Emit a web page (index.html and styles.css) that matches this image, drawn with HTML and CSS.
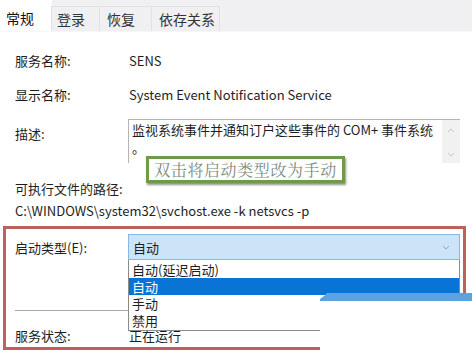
FILE: index.html
```html
<!DOCTYPE html>
<html>
<head>
    <meta charset="UTF-8">
    <title>SENS 属性</title>
    <link rel="stylesheet" href="styles.css">
</head>
<body>
    <div class="tabs">
        <div class="tab active">常规</div>
        <div class="tab">登录</div>
        <div class="tab">恢复</div>
        <div class="tab">依存关系</div>
    </div>

    <div class="panel">
        <div class="row first">
            <span class="label">服务名称:</span>
            <span class="value">SENS</span>
        </div>
        <div class="row">
            <span class="label">显示名称:</span>
            <span class="value">System Event Notification Service</span>
        </div>
        <div class="row desc">
            <span class="label">描述:</span>
            <div class="textbox">
                <div class="textbox-text">监视系统事件并通知订户这些事件的 COM+ 事件系统<br>。</div>
                <div class="scroll">
                    <svg width="8" height="5" viewBox="0 0 8 5"><path d="M1 4 L4 1 L7 4" fill="none" stroke="#c4c4c4" stroke-width="1"/></svg>
                    <svg width="8" height="5" viewBox="0 0 8 5"><path d="M1 1 L4 4 L7 1" fill="none" stroke="#c4c4c4" stroke-width="1"/></svg>
                </div>
            </div>
        </div>
        <div class="path-label">可执行文件的路径:</div>
        <div class="path">C:\WINDOWS\system32\svchost.exe -k netsvcs -p</div>

        <div class="startup">
            <div class="row start-row">
                <span class="label">启动类型(E):</span>
                <div class="select">
                    <span>自动</span>
                    <svg width="8" height="5" viewBox="0 0 8 5"><path d="M1 1 L4 4 L7 1" fill="none" stroke="#9aa5b0" stroke-width="1"/></svg>
                </div>
            </div>
            <div class="divider"></div>
            <div class="row status-row">
                <span class="label">服务状态:</span>
                <span class="value">正在运行</span>
            </div>
            <ul class="dropdown">
                <li>自动(延迟启动)</li>
                <li class="selected">自动</li>
                <li>手动</li>
                <li>禁用</li>
            </ul>
        </div>

        <div class="note">双击将启动类型改为手动</div>
    </div>

    <div class="patch"></div>
</body>
</html>
```

FILE: styles.css
```css
* { box-sizing: border-box; }
body { margin: 0; width: 472px; height: 353px; overflow: hidden; background: #fff; color: #1e1e1e; font-family: "Noto Sans CJK SC", "Noto Sans", sans-serif; font-size: 13px; position: relative; }

.tabs { display: flex; align-items: flex-end; height: 32px; background: #f0eff2; border-bottom: 1px solid #f6f6f6; }
.tab { height: 25px; line-height: 24px; font-size: 14px; color: #333; white-space: nowrap; border: 1px solid #e2e1e4; border-bottom: none; margin-left: -1px; }
.tab.active { height: 32px; line-height: 38px; background: #fff; width: 52px; padding-left: 6px; margin-left: 0; border: none; color: #111; }
.tab:nth-child(2) { width: 49px; padding-left: 5px; }
.tab:nth-child(3) { width: 53px; padding-left: 7px; }
.tab:nth-child(4) { width: 69px; padding-left: 7px; }

.panel { position: relative; padding: 1px 12px 0 15px; }
.row { display: flex; align-items: center; height: 20px; margin-top: 14px; }
.row.first { margin-top: 17px; }
.label { width: 113px; flex-shrink: 0; white-space: nowrap; }
.value { padding-left: 1px; white-space: nowrap; }

.row.desc { align-items: flex-start; height: 44px; margin-top: 15px; }
.row.desc .label { padding-top: 5px; }
.textbox { flex: 1; display: flex; height: 44px; border-top: 1px solid #b4b4b4; border-left: 1px solid #b4b4b4; }
.textbox-text { flex: 1; padding: 1px 0 0 3px; line-height: 18px; }
.scroll { width: 18px; background: #f1f1f1; display: flex; flex-direction: column; justify-content: space-between; align-items: center; padding: 8px 0 6px; }

.path-label { margin-top: 17px; line-height: 18px; }
.path { margin-top: 4px; line-height: 18px; }

.startup { position: relative; margin: 6px -6px 0 -12px; height: 124px; border: 3px solid #c0605c; padding: 5px 3px 0 9px; }
.start-row { margin-top: 0; height: 26px; }
.select { flex: 1; height: 26px; display: flex; align-items: center; justify-content: space-between; padding: 0 9px 0 4px; background: #cce4f7; border: 1px solid #86b8e4; }
.divider { margin-top: 50px; width: 113px; height: 1px; background: #a8a8a8; }
.status-row { margin-top: 14px; height: 20px; }

.dropdown { position: absolute; left: 122px; top: 31px; width: 332px; margin: 0; padding: 1px 0 1px; list-style: none; background: #fff; border: 1px solid #8c8c8c; border-top: none; }
.dropdown li { height: 17px; line-height: 17px; padding-left: 3px; white-space: nowrap; }
.dropdown li.selected { background: #0a74d6; color: #fff; }

.note { position: absolute; left: 146px; top: 124px; width: 199px; height: 27px; border: 3px solid #6f9a4c; background: #fff; box-shadow: 1px 2px 2px rgba(40, 60, 30, 0.55); color: #7c8c7c; font-family: "Noto Serif CJK SC", "Liberation Serif", serif; font-size: 16px; line-height: 21px; text-align: center; letter-spacing: 0.6px; white-space: nowrap; }

.patch { position: absolute; left: 320px; top: 293px; width: 152px; height: 60px; background: #fff; border-top: 8px solid #5ba2e0; clip-path: polygon(8px 0, 100% 0, 100% 100%, 0 100%, 0 6px); }
```
